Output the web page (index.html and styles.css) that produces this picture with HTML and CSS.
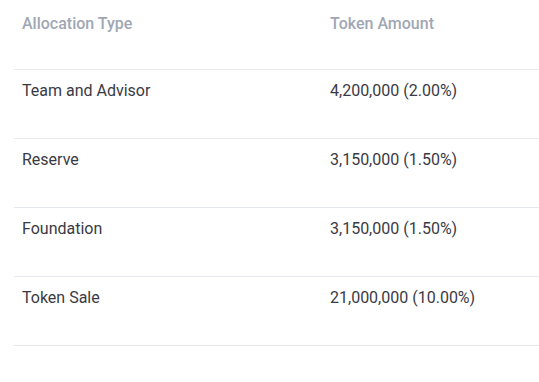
FILE: index.html
```html
<!DOCTYPE html>
<html>
<head>
<meta charset="utf-8">
<link rel="stylesheet" href="styles.css">
</head>
<body>
<table class="alloc">
  <thead>
    <tr><th class="c1">Allocation Type</th><th>Token Amount</th></tr>
  </thead>
  <tbody>
    <tr><td class="c1">Team and Advisor</td><td>4,200,000 (2.00%)</td></tr>
    <tr><td class="c1">Reserve</td><td>3,150,000 (1.50%)</td></tr>
    <tr><td class="c1">Foundation</td><td>3,150,000 (1.50%)</td></tr>
    <tr><td class="c1">Token Sale</td><td>21,000,000 (10.00%)</td></tr>
  </tbody>
</table>
</body>
</html>
```
FILE: styles.css
```css
html, body {
  margin: 0;
  padding: 0;
  background: #fff;
}
body {
  font-family: Roboto, "Liberation Sans", sans-serif;
  font-size: 16px;
  line-height: 19px;
}
.alloc {
  border-collapse: collapse;
  width: 525px;
  margin-left: 14px;
}
.alloc th {
  text-align: left;
  font-weight: 500;
  color: #a0a7b4;
  height: 69px;
  box-sizing: border-box;
  padding: 14px 8px 0;
  vertical-align: top;
  border-bottom: 1px solid #e5e8ee;
}
.alloc td {
  color: #3a3a44;
  height: 69px;
  box-sizing: border-box;
  padding: 11px 8px 0;
  vertical-align: top;
  border-bottom: 1px solid #e5e8ee;
}
.alloc .c1 {
  width: 308px;
}
```
